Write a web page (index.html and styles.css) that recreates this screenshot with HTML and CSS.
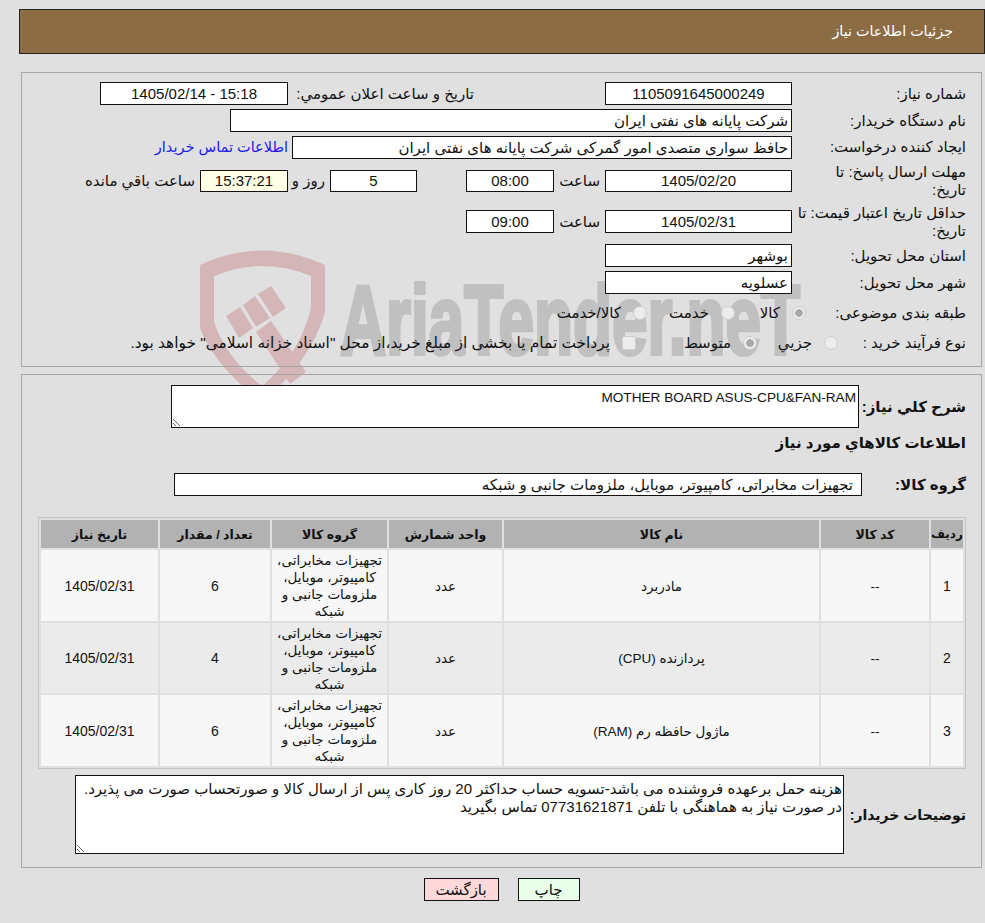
FILE: index.html
```html
<!DOCTYPE html>
<html lang="fa" dir="rtl">
<head>
<meta charset="utf-8">
<title>جزئیات اطلاعات نیاز</title>
<link rel="stylesheet" href="styles.css">
</head>
<body>
<svg class="watermark" width="985" height="923" viewBox="0 0 985 923" aria-hidden="true">
  <path class="wm-red" fill-rule="evenodd" d="M200 265Q262 236 325 265V312Q312 360 262 402Q214 366 200 328ZM214 276V322Q226 358 262 386Q300 354 311 308V276Q262 256 214 276Z"/>
  <path class="wm-red" d="M226 316 240 307 253 328 239 338ZM243 305 255 296 270 318 256 327ZM258 294 271 286 286 308 273 317ZM256 332 271 321 306 372 290 384Z"/>
  <text class="wm-text" x="340" y="354" textLength="460" lengthAdjust="spacingAndGlyphs">AriaTender.neT</text>
</svg>

<header class="title-bar">جزئیات اطلاعات نیاز</header>

<section class="panel panel-info">
  <div class="row r27">
    <div class="label">شماره نیاز:</div>
    <div class="field w187 center">1105091645000249</div>
    <div class="label2 w317">تاریخ و ساعت اعلان عمومي:</div>
    <div class="field w188 center">15:18 - 1405/02/14</div>
  </div>
  <div class="row r27">
    <div class="label">نام دستگاه خریدار:</div>
    <div class="field w562">شرکت پایانه های نفتی ایران</div>
  </div>
  <div class="row r26">
    <div class="label">ایجاد کننده درخواست:</div>
    <div class="field w500">حافظ سواری متصدی امور گمرکی شرکت پایانه های نفتی ایران</div>
    <a class="contact" href="#">اطلاعات تماس خریدار</a>
  </div>
  <div class="row r41">
    <div class="label">مهلت ارسال پاسخ: تا<br>تاریخ:</div>
    <div class="field w187 center short">1405/02/20</div>
    <div class="label2 w51">ساعت</div>
    <div class="field w88 center short">08:00</div>
    <div class="spacer w49"></div>
    <div class="field w87 center short">5</div>
    <div class="label2 w42">روز و</div>
    <div class="field w88 center short timer">15:37:21</div>
    <div class="label2">ساعت باقي مانده</div>
  </div>
  <div class="row r41">
    <div class="label">حداقل تاریخ اعتبار قیمت: تا<br>تاریخ:</div>
    <div class="field w187 center">1405/02/31</div>
    <div class="label2 w51">ساعت</div>
    <div class="field w88 center">09:00</div>
  </div>
  <div class="row r27">
    <div class="label">استان محل تحویل:</div>
    <div class="field w187">بوشهر</div>
  </div>
  <div class="row r27">
    <div class="label">شهر محل تحویل:</div>
    <div class="field w187">عسلویه</div>
  </div>
  <div class="row r34">
    <div class="label">طبقه بندی موضوعی:</div>
    <div class="options opts-cat">
      <span class="option o-first"><input class="radio" type="radio" name="cat" checked disabled>کالا</span>
      <span class="option o-second"><input class="radio" type="radio" name="cat" disabled>خدمت</span>
      <span class="option"><input class="radio" type="radio" name="cat" disabled>کالا/خدمت</span>
    </div>
  </div>
  <div class="row r26">
    <div class="label">نوع فرآیند خرید :</div>
    <div class="options opts-proc">
      <span class="option o-a"><input class="radio" type="radio" name="proc" disabled>جزیي</span>
      <span class="option o-b"><input class="radio" type="radio" name="proc" checked disabled>متوسط</span>
      <span class="option wide"><input class="check" type="checkbox" disabled>پرداخت تمام یا بخشی از مبلغ خرید،از محل "اسناد خزانه اسلامی" خواهد بود.</span>
    </div>
  </div>
</section>

<section class="panel panel-goods">
  <div class="row">
    <div class="label-b w107">شرح کلي نیاز:</div>
    <textarea class="area area-desc" readonly>MOTHER BOARD ASUS-CPU&amp;FAN-RAM</textarea>
  </div>
  <h2 class="subhead">اطلاعات کالاهاي مورد نیاز</h2>
  <div class="row group-row">
    <div class="label-b w104">گروه کالا:</div>
    <div class="field w688 group">تجهیزات مخابراتی، کامپیوتر، موبایل، ملزومات جانبی و شبکه</div>
  </div>
  <table class="items">
    <colgroup>
      <col class="c1"><col class="c2"><col class="c3"><col class="c4"><col class="c5"><col class="c6"><col class="c7">
    </colgroup>
    <thead>
      <tr><th>ردیف</th><th>کد کالا</th><th>نام کالا</th><th>واحد شمارش</th><th>گروه کالا</th><th>تعداد / مقدار</th><th>تاریخ نیاز</th></tr>
    </thead>
    <tbody>
      <tr><td>1</td><td>--</td><td>مادربرد</td><td>عدد</td><td>تجهیزات مخابراتی، کامپیوتر، موبایل، ملزومات جانبی و شبکه</td><td>6</td><td>1405/02/31</td></tr>
      <tr><td>2</td><td>--</td><td>پردازنده (CPU)</td><td>عدد</td><td>تجهیزات مخابراتی، کامپیوتر، موبایل، ملزومات جانبی و شبکه</td><td>4</td><td>1405/02/31</td></tr>
      <tr><td>3</td><td>--</td><td>ماژول حافظه رم (RAM)</td><td>عدد</td><td>تجهیزات مخابراتی، کامپیوتر، موبایل، ملزومات جانبی و شبکه</td><td>6</td><td>1405/02/31</td></tr>
    </tbody>
  </table>
  <div class="row note-row">
    <div class="label-b w122">توضیحات خریدار:</div>
    <textarea class="area area-note" readonly>هزینه حمل برعهده فروشنده می باشد-تسویه حساب حداکثر 20 روز کاری پس از ارسال کالا و صورتحساب صورت می پذیرد.
در صورت نیاز به هماهنگی با تلفن 07731621871 تماس بگیرید</textarea>
  </div>
</section>

<div class="actions">
  <button class="btn btn-print" type="button">چاپ</button>
  <button class="btn btn-back" type="button">بازگشت</button>
</div>
</body>
</html>
```

FILE: styles.css
```css
* { box-sizing: border-box; }
html, body { margin: 0; padding: 0; }
body {
  background: #e0e0e0;
  color: #111;
  font-family: "Liberation Sans", "DejaVu Sans", sans-serif;
  font-size: 15px;
  position: relative;
  height: 923px;
  overflow: hidden;
}
.watermark { position: absolute; left: 0; top: 0; z-index: -1; direction: ltr; }
.wm-red { fill: #d5b6b8; }
.wm-text {
  fill: #c0c0c0;
  font-family: "Liberation Sans", sans-serif;
  font-weight: 700;
  font-size: 98px;
  direction: ltr;
  stroke: #c0c0c0;
  stroke-width: 4px;
}

.title-bar {
  margin: 9px 0 0 19px;
  height: 45px;
  background: #8c6c42;
  border: 1px solid #222;
  color: #fff;
  padding: 0 31px 0 0;
  line-height: 43px;
  font-size: 14.3px;
}
.panel {
  margin: 18px 3px 0 21px;
  border: 1px solid #a6a6a6;
  padding: 7px 15px 10px 0;
}
.panel-goods { margin-top: 7px; padding: 10px 15px 13px 0; }

.row { display: flex; align-items: center; }
.r26 { height: 26px; }
.r27 { height: 27px; }
.r34 { height: 34px; }
.r41 { height: 41px; }

.label { width: 174px; flex: none; line-height: 18px; white-space: nowrap; }
.label2 { flex: none; padding-right: 5px; white-space: nowrap; }
.field {
  flex: none;
  height: 23px;
  background: #fff;
  border: 1px solid #111;
  line-height: 21px;
  padding: 0 3px;
  white-space: nowrap;
  overflow: hidden;
}
.short { height: 22px; line-height: 20px; }
.center { text-align: center; }
.timer { background: #ffffe8; }
.w42 { width: 42px; }
.w49 { width: 49px; }
.w51 { width: 51px; }
.w87 { width: 87px; }
.w88 { width: 88px; }
.w104 { width: 104px; flex: none; }
.w107 { width: 107px; flex: none; }
.w122 { width: 122px; flex: none; white-space: nowrap; font-size: 14px; }
.w187 { width: 187px; }
.w188 { width: 188px; }
.w317 { width: 317px; padding-right: 131px; }
.w500 { width: 500px; }
.w562 { width: 562px; }
.w688 { width: 688px; }
.spacer { flex: none; }
.contact { color: #1a1aee; text-decoration: none; padding-right: 4px; font-size: 14.5px; }

.options { display: flex; align-items: center; }
.opts-cat { margin-right: -14px; }
.opts-proc { margin-right: -46px; }
.option { display: inline-flex; align-items: center; white-space: nowrap; }
.wide { font-size: 15.4px; }
.o-first { width: 71px; }
.o-second { width: 88px; }
.o-a { width: 81px; }
.o-b { width: 121px; }
.radio, .check {
  appearance: none;
  margin: 0 0 0 12px;
  flex: none;
  width: 14px;
  height: 14px;
  border: 1px solid #cfcfcf;
  border-radius: 50%;
  background: #ececec;
}
.radio:checked { background: radial-gradient(circle, #a8a8a8 0 3.5px, #ececec 4px); }
.check { border-radius: 2px; }

.label-b { font-weight: 700; }
.area {
  flex: none;
  display: block;
  border: 1px solid #111;
  background: #fff;
  color: #111;
  font: inherit;
  line-height: 18px;
  margin: 0;
  outline: none;
  resize: both;
}
.area-desc { width: 688px; height: 43px; padding: 3px 2px; font-size: 13.6px; }
.area-note { width: 769px; height: 79px; padding: 4px 1px; font-size: 15px; }
.subhead { margin: 0; font-size: 15px; font-weight: 700; height: 30px; line-height: 30px; }
.group-row { margin-top: 15px; }
.group { padding-right: 8px; }

.items {
  margin: 21px 0 0 0;
  width: 928px;
  table-layout: fixed;
  border-collapse: separate;
  border-spacing: 2px;
  border: 1px solid #c4c4c4;
  font-size: 13.5px;
}
.c1 { width: 32px; }
.c2 { width: 108px; }
.c3 { width: 315px; }
.c4 { width: 113px; }
.c5 { width: 115px; }
.c6 { width: 110px; }
.c7 { width: 117px; }
.items th {
  background: #b2b2b2;
  height: 28px;
  padding: 0;
  font-size: 12.5px;
  font-weight: 700;
  text-align: center;
  white-space: nowrap;
}
.items th:first-child { font-size: 12px; }
.items td {
  background: #f7f7f7;
  height: 71px;
  padding: 1px 1px 0;
  line-height: 17px;
  text-align: center;
}
.items td:first-child, .items td:nth-child(6), .items td:nth-child(7) { font-size: 14px; }
.items tbody tr:nth-child(2) td { background: #ebebeb; height: 70px; }
.note-row { margin-top: 6px; }

.actions {
  margin: 10px 3px 0 21px;
  display: flex;
  justify-content: center;
  gap: 19px;
}
.btn {
  height: 23px;
  border: 1px solid #111;
  color: #111;
  font: inherit;
  font-size: 15px;
  padding: 0;
}
.btn-print { width: 62px; background: #eaffea; }
.btn-back { width: 75px; background: #ffd9d9; }
```
